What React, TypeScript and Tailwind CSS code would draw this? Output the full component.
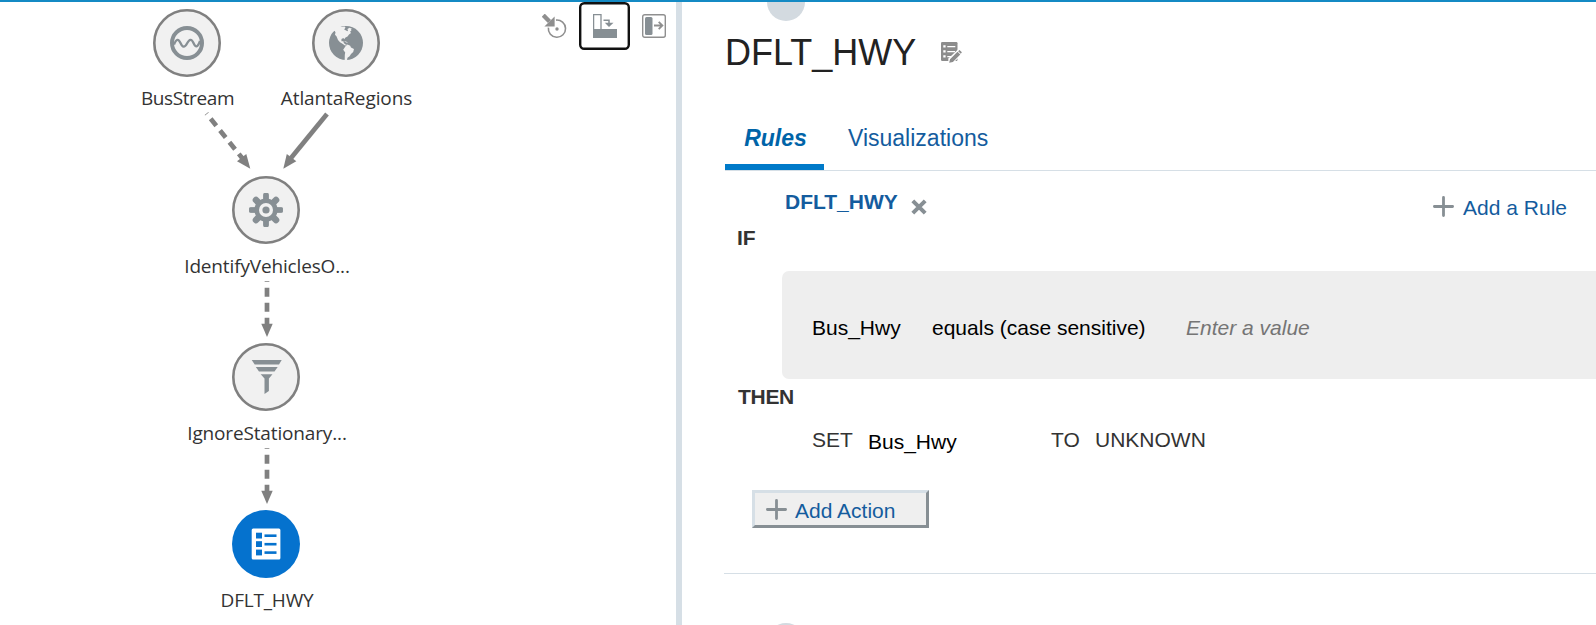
import type { ReactNode } from "react";

const ICON = "#878f94";
const STROKE = "#808080";

function WaveIcon() {
  return (
    <svg viewBox="-17 -17 34 34" width="34" height="34" fill="none" stroke={ICON}>
      <circle r="15" strokeWidth="4" />
      <path d="M-13 1.5 C-10.5 -4.5 -8.5 -4.5 -6.5 0 S-2.5 5 0 0.5 S4.5 -4.5 6.5 0 S10.5 5 13 -2" strokeWidth="2.3" />
    </svg>
  );
}

function GlobeIcon() {
  return (
    <svg viewBox="-17 -17 34 34" width="34" height="34">
      <circle r="17" fill={ICON} />
      <path
        fill="#f1f1f1"
        d="M-17 -17 L-6 -17 L-5 -16 L-1.5 -16.4 L-0.5 -15.6 L-1.8 -13.5 L0.5 -12.2 L2 -11.8 L1.5 -14 L3.5 -15.3 L6 -14.2 L4.8 -13.2 L5.5 -12.3 L4 -11.5 L5 -10 L3 -8.6 L1.5 -6.5 L-0.5 -5.5 L-1.8 -3.8 L-2.6 -5 L-4.5 -4 L-4.6 -1.8 L-2.6 -1.7 L-2.2 0 L-0.5 1.5 L1.5 2 L-1 2.6 L-3.5 0.8 L-6 -0.8 L-8 -3 L-9.4 -6.5 L-11 -8.3 L-10.5 -10.8 L-11.5 -12.3 L-17 -9 Z"
      />
      <path
        fill="#f1f1f1"
        d="M-0.5 3.2 L1.5 1.6 L4.2 2.8 L5 4.6 L8 6 L7.2 9 L5 11 L3.6 13.2 L1.5 14.8 L1 17 L-1.3 17 L-1.2 12 L-0.8 9.4 L-2.8 6.8 Z"
      />
      <path fill="#f1f1f1" d="M-2 -1.5 L0 -1.6 L2.2 -0.3 L0.5 -0.4 Z" />
    </svg>
  );
}

function GearIcon() {
  return (
    <svg viewBox="-17 -17 34 34" width="34" height="34">
      <g stroke={ICON} strokeWidth="5.2">
        <path d="M0 -15.5V-10M0 10V15.5M-15.5 0H-10M10 0H15.5" strokeLinecap="butt" />
        <rect x="-2" y="-16.2" width="4" height="32.4" rx="0.5" strokeWidth="1.5" fill={ICON} />
        <rect x="-16.2" y="-2" width="32.4" height="4" rx="0.5" strokeWidth="1.5" fill={ICON} />
        <path d="M-10 -10L10 10M-10 10L10 -10" strokeWidth="6.6" strokeLinecap="round" />
      </g>
      <circle r="11.6" fill={ICON} />
      <circle r="7" fill="#f1f1f1" />
      <circle r="3.6" fill={ICON} />
    </svg>
  );
}

function FunnelIcon() {
  return (
    <svg viewBox="-17 -17 34 34" width="34" height="34" fill={ICON}>
      <path d="M-14.3 -17H15.7L13 -12.5H-11.3Z" />
      <path d="M-10.2 -10H11.7L8.5 -5.5H-7Z" />
      <path d="M-5.3 -2.8H6.5L2.9 1.5V14L-1.5 17V1.5Z" />
    </svg>
  );
}

function ListIcon() {
  return (
    <svg viewBox="-17 -17 34 34" width="34" height="34">
      <rect x="-14.3" y="-15.5" width="28.7" height="31" rx="1.5" fill="#fff" />
      <g fill="#0572ce">
        <rect x="-10" y="-11.3" width="6" height="5.8" />
        <rect x="-10" y="-2.8" width="6" height="5.8" />
        <rect x="-10" y="5.6" width="6" height="5.8" />
        <rect x="-1.5" y="-9.6" width="12" height="2.6" />
        <rect x="-1.5" y="-1.1" width="12" height="2.6" />
        <rect x="-1.5" y="7.3" width="12" height="2.6" />
      </g>
    </svg>
  );
}

function Node({ place, label, labelClass, active, children }: { place: string; label: string; labelClass: string; active?: boolean; children: ReactNode }) {
  return (
    <div className={`absolute flex w-[200px] flex-col items-center ${place}`}>
      <div className={`relative flex size-[68px] items-center justify-center rounded-full ${active ? "bg-[#0572ce]" : "bg-[#f1f1f1]"}`}>
        {!active && (
          <svg className="absolute inset-0" width="68" height="68" viewBox="0 0 68 68" fill="none">
            <circle cx="34" cy="34" r="32.7" stroke={STROKE} strokeWidth="2.6" />
          </svg>
        )}
        {children}
      </div>
      <span className={`whitespace-nowrap font-['Open_Sans','Noto_Sans',sans-serif] text-[19px] leading-[26px] text-[#333] ${labelClass}`}>
        {label}
      </span>
    </div>
  );
}

function Edges() {
  return (
    <svg className="absolute left-0 top-0" width="676" height="625" stroke={STROKE} strokeWidth="4.7" fill={STROKE}>
      <g strokeDasharray="9 6" strokeDashoffset="8.3">
        <path d="M206.5 113.5L242.5 158.5" />
        <path d="M267 281V325" />
        <path d="M267 448V492" />
      </g>
      <path d="M327 114L291 158" />
      <g stroke="none">
        <path d="M250.3 168.7L237 161.3L246.3 154Z" />
        <path d="M283.3 168.7L286.8 154L296.3 161.3Z" />
        <path d="M267 337L261.3 323.7H272.7Z" />
        <path d="M267 504L261.3 490.7H272.7Z" />
      </g>
    </svg>
  );
}

function Toolbar() {
  return (
    <div className="relative flex h-[48px] items-center justify-end pr-[10px]">
      <svg width="25" height="25" viewBox="0 0 25 25" className="mr-[12px]" fill="none" stroke="#8f8f8f">
        <path d="M14 6.1A8.6 8.6 0 1 1 6.4 13.6" strokeWidth="1.6" />
        <circle cx="15" cy="15" r="1.7" fill="#8f8f8f" stroke="none" />
        <path d="M1.2 1.2L7.5 7.5" strokeWidth="4.4" />
        <path d="M12.6 12.6H2.4L12.6 2.4Z" fill="#8f8f8f" stroke="none" />
      </svg>
      <div className="relative mr-[12px] flex h-[48px] w-[51px] items-center justify-center">
        <svg className="absolute inset-0" width="51" height="48" viewBox="0 0 51 48" fill="none">
          <rect x="1.2" y="1.2" width="48.6" height="45.6" rx="4" stroke="#111" strokeWidth="2.4" />
        </svg>
        <svg width="24" height="24" viewBox="0 0 24 24" fill="none" stroke={ICON}>
          <path d="M0.6 15.5V0.6H8V15.5" strokeWidth="1.3" />
          <path d="M0 15H24V24H0Z" fill={ICON} stroke="none" />
          <path d="M10.5 6.2H16V9.5" strokeWidth="1.5" />
          <path d="M11.8 8.7H20.5L16 13Z" fill={ICON} stroke="none" />
        </svg>
      </div>
      <svg width="24" height="24" viewBox="0 0 24 24" fill="none" stroke="#8f8f8f">
        <rect x="0.7" y="0.7" width="22.6" height="22.6" rx="2" strokeWidth="1.4" />
        <rect x="3" y="3" width="7.5" height="18" rx="1.5" fill={ICON} stroke="none" />
        <path d="M12 11.5H20M16.7 7.8L20.4 11.5L16.7 15.2" strokeWidth="1.8" />
      </svg>
    </div>
  );
}

function Plus() {
  return (
    <svg className="mt-px" width="21" height="21" viewBox="0 0 21 21" stroke={ICON} strokeWidth="2.8" strokeLinecap="round">
      <path d="M10.5 1.4V19.6M1.4 10.5H19.6" />
    </svg>
  );
}

function EditNotesIcon() {
  return (
    <svg width="21" height="21" viewBox="0 0 21 21">
      <rect width="16.5" height="19" rx="1.2" fill="#8c8c8c" />
      <g fill="#fff">
        <path d="M2.3 3.3H4.6V5.6H2.3ZM2.3 8.3H4.6V10.6H2.3ZM2.3 13.3H4.6V15.6H2.3Z" />
        <path d="M6.3 4H14.3V5.2H6.3ZM6.3 9H14V10.2H6.3ZM6.3 14H10V15.2H6.3Z" />
      </g>
      <path d="M7.3 21V16.5L17 7.6H21V12.5L12 21Z" fill="#fff" />
      <path d="M8.2 20.8L9 17.2L16.5 9.8L19.3 12.5L11.9 20Z M17.1 9.2L18.5 8L20.9 10.3L19.8 11.8Z" fill="#8c8c8c" />
    </svg>
  );
}

export default function App() {
  return (
    <div className="flex h-[625px] w-[1596px] flex-col overflow-hidden border-t-2 border-[#148ac4] bg-white font-['Liberation_Sans',Arial,sans-serif]">
      <div className="flex min-h-0 flex-1">
        <section className="relative -mt-[2px] w-[676px] shrink-0 pt-[2px]">
          <Toolbar />
          <Edges />
          <Node place="left-[87px] top-[9px]" label="BusStream" labelClass="mt-[8px] ml-[1px] tracking-[-0.4px]"><WaveIcon /></Node>
          <Node place="left-[246px] top-[9px]" label="AtlantaRegions" labelClass="mt-[8px] ml-[1px] tracking-[-0.1px]"><GlobeIcon /></Node>
          <Node place="left-[166px] top-[176px]" label="IdentifyVehiclesO..." labelClass="mt-[9px] ml-[2px] tracking-[-0.15px]"><GearIcon /></Node>
          <Node place="left-[166px] top-[343px]" label="IgnoreStationary..." labelClass="mt-[9px] ml-[2px] tracking-[-0.15px]"><FunnelIcon /></Node>
          <Node place="left-[166px] top-[510px]" label="DFLT_HWY" labelClass="mt-[9px] ml-[2px] tracking-[-0.2px]" active><ListIcon /></Node>
        </section>

        <div className="w-[6px] shrink-0 bg-[#d6dfe6]" />

        <main className="relative flex min-w-0 flex-1 flex-col pl-[42px] text-[21px] leading-[24px] text-[#333]">
          <div className="absolute left-[85px] top-[-19px] h-[38px] w-[38px] rounded-full bg-[#d3dae0] [clip-path:inset(19px_0_0_0)]" />
          <div className="absolute left-[85px] top-[621px] h-[38px] w-[38px] rounded-full bg-[#d3dae0]" />

          <header className="ml-[1px] mt-[31px] flex h-[40px] items-center">
            <h1 className="text-[36px] leading-[40px] text-[#222]">DFLT_HWY</h1>
            <button className="ml-[25px] mt-[-1px]"><EditNotesIcon /></button>
          </header>

          <nav className="ml-[1px] mt-[52px] flex h-[46px] border-b border-[#d6dfe6] text-[23px] leading-[26px] text-[#145c9e]">
            <button className="flex w-[99px] items-start justify-center border-b-[6px] border-[#007ac9] pl-[2px] font-bold italic text-[#0064a8]">Rules</button>
            <button className="ml-[24px] flex items-start">Visualizations</button>
          </nav>

          <div className="flex h-[55px] items-start pl-[61px] pr-[29px] pt-[19px]">
            <span className="font-bold text-[#145c9e]">DFLT_HWY</span>
            <svg className="ml-[13px] mt-[9px]" width="16" height="16" viewBox="0 0 16 16" stroke={ICON} strokeWidth="4">
              <path d="M1.8 1.8L14.2 14.2M14.2 1.8L1.8 14.2" />
            </svg>
            <button className="ml-auto mt-[5px] flex items-start gap-[9px] text-[#145c9e]">
              <Plus />
              <span className="pt-px">Add a Rule</span>
            </button>
          </div>

          <div className="h-[45px] pl-[13px] font-bold">IF</div>

          <div className="ml-[58px] flex h-[108px] items-start rounded-l-[7px] bg-[#eee] pl-[30px] pt-[45px] text-black">
            <span className="w-[120px]">Bus_Hwy</span>
            <span className="w-[254px]">equals (case sensitive)</span>
            <span className="italic text-[#757575]">Enter a value</span>
          </div>

          <div className="mt-[6px] h-[43px] pl-[14px] font-bold tracking-[-0.3px]">THEN</div>

          <div className="flex h-[62px] items-start pl-[88px]">
            <span className="w-[56px]">SET</span>
            <span className="mt-[2px] w-[183px] text-black">Bus_Hwy</span>
            <span className="w-[44px]">TO</span>
            <span>UNKNOWN</span>
          </div>

          <button className="ml-[28px] flex h-[38px] w-[177px] items-start gap-[8px] border-[3px] border-b-[#878f94] border-l-[#d6dfe6] border-r-[#878f94] border-t-[#d6dfe6] bg-[#efefef] pl-[11px] pt-[5px] text-[#145c9e]">
            <Plus />
            <span className="pt-[1px]">Add Action</span>
          </button>

          <div className="mt-[45px] h-px shrink-0 bg-[#d6dfe6]" />
        </main>
      </div>
    </div>
  );
}
